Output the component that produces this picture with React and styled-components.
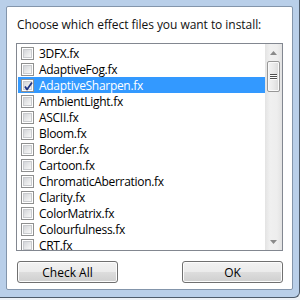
import React from 'react';
import styled, { createGlobalStyle } from 'styled-components';

const GlobalStyle = createGlobalStyle`
  html, body {
    margin: 0;
    padding: 0;
    background: #eef2f7;
  }
  body {
    font-family: "Open Sans", "Noto Sans", sans-serif;
  }
`;

const Window = styled.div`
  width: 300px;
  height: 298px;
  box-sizing: border-box;
  display: flex;
  padding: 6px 6px 7px 6px;
  background: #b9cfe9;
  border-right: 1px solid #4d5b6b;
  border-bottom: 1px solid #4d5b6b;
  border-bottom-right-radius: 6px;
`;

const Client = styled.div`
  flex: 1;
  display: flex;
  flex-direction: column;
  padding: 10px 9px 6px 9px;
  background: #fff;
  border: 1px solid #8395ab;
  border-radius: 2px;
`;

const Label = styled.div`
  font-size: 12px;
  line-height: 16px;
  height: 16px;
  padding-left: 1px;
  color: #111;
  white-space: nowrap;
  letter-spacing: -0.05px;
`;

const ListBox = styled.div`
  margin-top: 10px;
  height: 208px;
  box-sizing: border-box;
  display: flex;
  border: 1px solid #828790;
`;

const Items = styled.div`
  flex: 1;
  padding: 1px 0 0 1px;
  overflow: hidden;
`;

const Row = styled.div`
  height: 16px;
  display: flex;
  align-items: center;
  padding-left: 3px;
  font-size: 12px;
  letter-spacing: -0.3px;
  white-space: nowrap;
  color: ${(p) => (p.$selected ? '#fff' : '#000')};
  background: ${(p) => (p.$selected ? '#3399ff' : 'transparent')};
`;

const Box = styled.span`
  width: 13px;
  height: 13px;
  box-sizing: border-box;
  margin-right: 5px;
  flex: none;
  position: relative;
  border: 1px solid #8e8f8f;
  background: #fff;
  &::before {
    content: '';
    position: absolute;
    inset: 1px;
    background: linear-gradient(135deg, #d3d5d9 0%, #e8e9ea 55%, #f8f8f8 100%);
    border: 1px solid #c9cbce;
    box-sizing: border-box;
  }
  svg {
    position: absolute;
    left: 0;
    top: 0;
  }
`;

const ScrollBar = styled.div`
  width: 17px;
  display: flex;
  flex-direction: column;
  align-items: center;
  background: linear-gradient(to right, #e3e3e3, #f0f0f0 30%, #eeeeee 70%, #e3e3e3);
`;

const Arrow = styled.div`
  height: 17px;
  width: 17px;
  display: flex;
  align-items: center;
  justify-content: center;
`;

const Track = styled.div`
  flex: 1;
  display: flex;
  flex-direction: column;
  align-items: center;
`;

const Thumb = styled.div`
  width: 13px;
  height: 31px;
  box-sizing: border-box;
  border: 1px solid #979797;
  border-radius: 2px;
  background: linear-gradient(to right, #f4f4f4, #eaeaea 50%, #dadada);
  box-shadow: inset 0 0 0 1px #fafafa;
  display: flex;
  flex-direction: column;
  align-items: center;
  justify-content: center;
  gap: 1px;
`;

const Grip = styled.span`
  width: 7px;
  height: 1px;
  background: #505050;
  box-shadow: 0 1px 0 #fff;
`;

const Buttons = styled.div`
  margin-top: 10px;
  display: flex;
  justify-content: space-between;
  padding-left: 1px;
`;

const Button = styled.button`
  width: 101px;
  height: 22px;
  padding: 0;
  font-family: "Open Sans", "Noto Sans", sans-serif;
  font-size: 12px;
  color: #000;
  border: 1px solid #707070;
  border-radius: 3px;
  background: linear-gradient(#f2f2f2 0%, #ebebeb 50%, #dddddd 50%, #cfcfcf 100%);
  box-shadow: inset 0 0 0 1px #fcfcfc;
`;

const files = [
  '3DFX.fx',
  'AdaptiveFog.fx',
  'AdaptiveSharpen.fx',
  'AmbientLight.fx',
  'ASCII.fx',
  'Bloom.fx',
  'Border.fx',
  'Cartoon.fx',
  'ChromaticAberration.fx',
  'Clarity.fx',
  'ColorMatrix.fx',
  'Colourfulness.fx',
  'CRT.fx',
];

const Check = () => (
  <svg width="13" height="13" viewBox="0 0 13 13">
    <path d="M3 6.5 L5 9.5 L10 2.5" fill="none" stroke="#1e3585" strokeWidth="1.8" strokeLinejoin="round" />
  </svg>
);

export default function App() {
  return (
    <>
      <GlobalStyle />
      <Window>
        <Client>
          <Label>Choose which effect files you want to install:</Label>
          <ListBox>
            <Items>
              {files.map((name) => {
                const selected = name === 'AdaptiveSharpen.fx';
                return (
                  <Row key={name} $selected={selected}>
                    <Box>{selected && <Check />}</Box>
                    {name}
                  </Row>
                );
              })}
            </Items>
            <ScrollBar>
              <Arrow>
                <svg width="7" height="4" viewBox="0 0 7 4">
                  <path d="M0 4 L3.5 0 L7 4 Z" fill="#8a8a8a" />
                </svg>
              </Arrow>
              <Track>
                <Thumb>
                  <Grip />
                  <Grip />
                  <Grip />
                </Thumb>
              </Track>
              <Arrow>
                <svg width="7" height="4" viewBox="0 0 7 4">
                  <path d="M0 0 L7 0 L3.5 4 Z" fill="#8a8a8a" />
                </svg>
              </Arrow>
            </ScrollBar>
          </ListBox>
          <Buttons>
            <Button>Check All</Button>
            <Button>OK</Button>
          </Buttons>
        </Client>
      </Window>
    </>
  );
}
